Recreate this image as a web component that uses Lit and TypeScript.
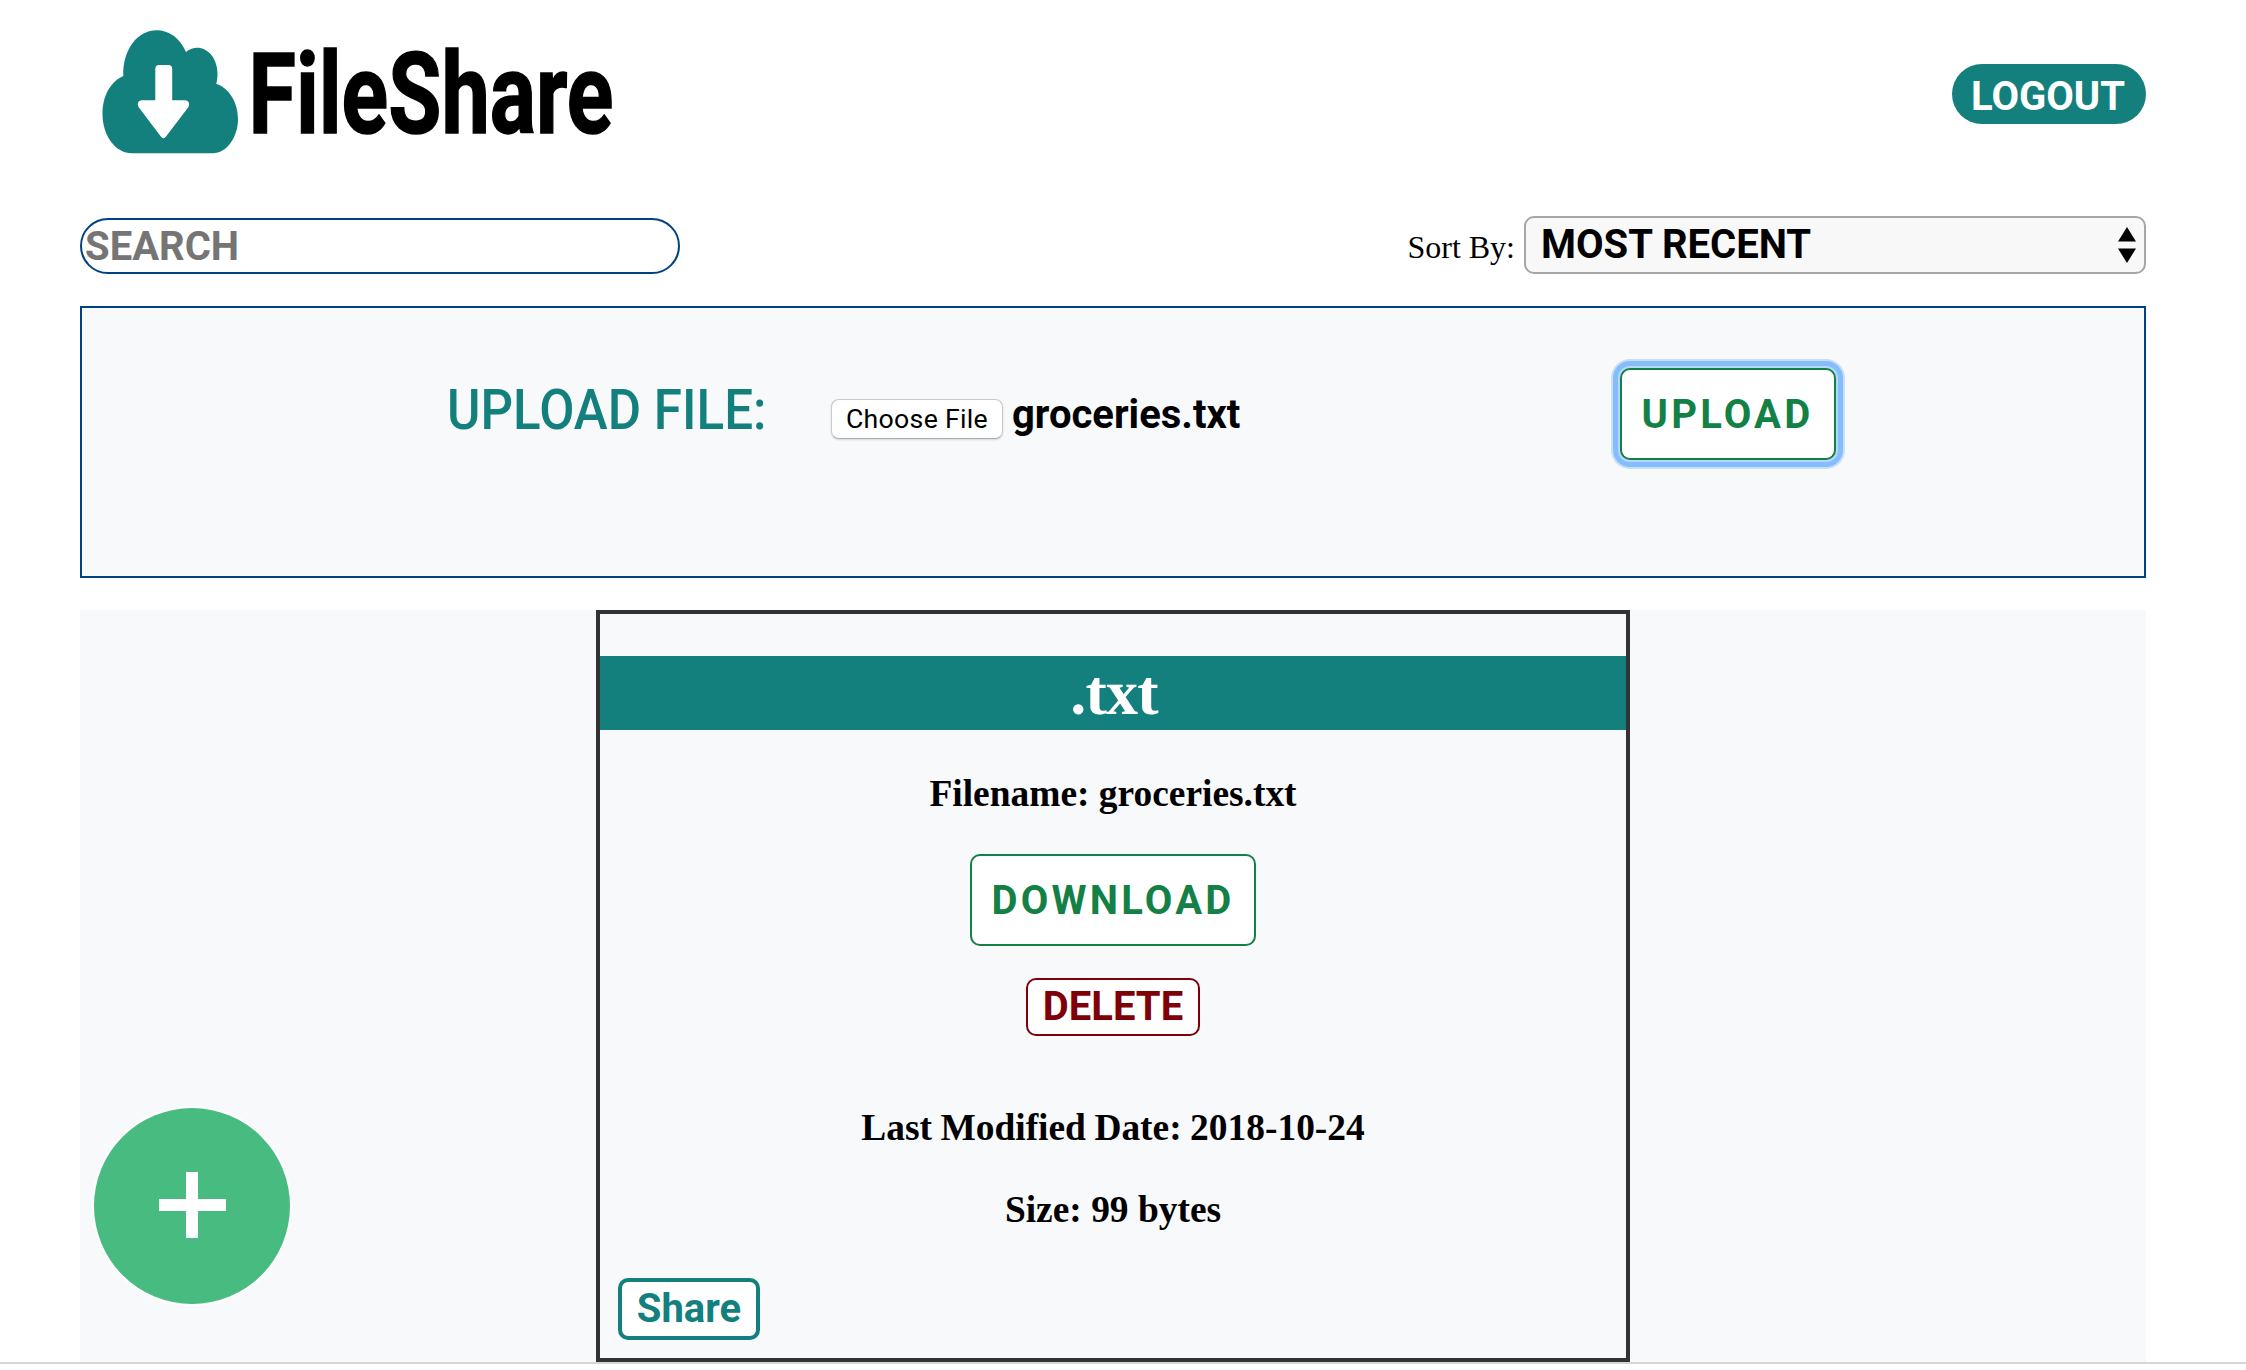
import { LitElement, html, css, svg } from "lit";
import { customElement, state } from "lit/decorators.js";

interface StoredFile {
  ext: string;
  name: string;
  modified: string;
  size: string;
}

@customElement("file-card")
class FileCard extends LitElement {
  static properties = { file: { attribute: false } };
  declare file: StoredFile;

  static styles = css`
    :host {
      display: flex;
      flex-direction: column;
      align-items: center;
      box-sizing: border-box;
      width: 1034px;
      height: 752px;
      border: 4px solid #333;
      color: #000;
      font-family: "Liberation Serif", serif;
    }
    .ext {
      align-self: stretch;
      margin: 42px 0 0;
      background: #13807e;
      color: #fff;
      text-align: center;
      font-size: 64px;
      line-height: 74px;
      font-weight: 700;
      letter-spacing: -0.8px;
      text-indent: 2px;
    }
    .line {
      margin: 0;
      font-size: 37.44px;
      line-height: 44px;
      font-weight: 700;
      white-space: nowrap;
    }
    .name { margin-top: 42px; }
    .date { margin-top: 70px; word-spacing: -0.9px; }
    .size { margin-top: 38px; }
    button {
      box-sizing: border-box;
      background: #fff;
      font-family: Roboto, sans-serif;
      font-size: 40px;
      font-weight: 700;
      padding: 0;
      border-radius: 10px;
      line-height: 46px;
      white-space: nowrap;
    }
    .download {
      margin-top: 38px;
      width: 286px;
      height: 92px;
      border: 2px solid #138046;
      color: #138046;
      letter-spacing: 3.2px;
      padding-top: 2px;
    }
    .delete {
      margin-top: 32px;
      width: 174px;
      height: 58px;
      border: 2px solid #800008;
      color: #800008;
    }
    .share {
      align-self: flex-start;
      margin: 46px 0 0 18px;
      width: 142px;
      height: 62px;
      border: 4px solid #13807e;
      color: #13807e;
    }
  `;

  render() {
    const f = this.file;
    return html`
      <h1 class="ext">${f.ext}</h1>
      <h3 class="line name">Filename: ${f.name}</h3>
      <button class="download">DOWNLOAD</button>
      <button class="delete">DELETE</button>
      <h3 class="line date">Last Modified Date: ${f.modified}</h3>
      <h3 class="line size">Size: ${f.size}</h3>
      <button class="share">Share</button>
    `;
  }
}

@customElement("app-root")
class AppRoot extends LitElement {
  @state() files: StoredFile[] = [
    { ext: ".txt", name: "groceries.txt", modified: "2018-10-24", size: "99 bytes" },
  ];

  static styles = css`
    :host {
      display: block;
      position: relative;
      box-sizing: border-box;
      height: 1370px;
      overflow: hidden;
      background: #fff;
      color: #000;
      font-family: Roboto, sans-serif;
    }
    .page {
      box-sizing: border-box;
      height: 1364px;
      padding: 0 100px 0 80px;
      border-bottom: 2px solid #d6d6d6;
      display: flex;
      flex-direction: column;
    }
    .header {
      height: 188px;
      flex: none;
      display: flex;
      justify-content: space-between;
      align-items: flex-start;
    }
    .logo { display: block; }
    .logo text { font-family: Roboto, sans-serif; font-weight: 700; }
    .logout {
      margin-top: 64px;
      width: 194px;
      height: 60px;
      border: 0;
      border-radius: 30px;
      background: #13807e;
      color: #fff;
      font: 700 40px/46px Roboto, sans-serif;
      padding: 6px 2px 0 0;
    }
    .tools {
      flex: none;
      height: 118px;
      display: flex;
      justify-content: space-between;
      align-items: flex-start;
    }
    .search {
      box-sizing: border-box;
      margin-top: 30px;
      width: 600px;
      height: 56px;
      border: 2px solid #004282;
      border-radius: 28px;
      padding: 0 3px;
      font: 700 40px/46px Roboto, sans-serif;
      background: #fff;
    }
    .search::placeholder { color: #757575; opacity: 1; }
    .sort { display: flex; gap: 9px; margin-top: 28px; }
    .sort-label {
      font-family: "Liberation Serif", serif;
      font-size: 32px;
      line-height: 37px;
      padding-top: 13px;
      white-space: nowrap;
    }
    .select {
      box-sizing: border-box;
      width: 622px;
      height: 58px;
      border: 2px solid #a6a6a6;
      border-radius: 10px;
      background: #f8f8f8;
      display: flex;
      justify-content: space-between;
      align-items: center;
      padding: 0 8px 0 15px;
      font-size: 40px;
      line-height: 46px;
      font-weight: 700;
    }
    .arrows { display: block; }
    .upload {
      box-sizing: border-box;
      flex: none;
      height: 272px;
      border: 2px solid #004282;
      background: #f8f9fb;
      display: flex;
      align-items: flex-start;
      padding-left: 365px;
    }
    .upload-title {
      margin-top: 70px;
      width: 384px;
      font-size: 54.6px;
      line-height: 64px;
      font-weight: 500;
      transform: scaleX(0.937);
      transform-origin: left;
      color: #13807e;
      white-space: nowrap;
    }
    .picker { display: flex; gap: 9px; width: 789px; }
    .choose {
      box-sizing: border-box;
      margin-top: 91px;
      width: 172px;
      height: 40px;
      border: 1px solid #c9c9c9;
      border-bottom-color: #b0b0b0;
      border-radius: 8px;
      background: #fff;
      box-shadow: 0 1px 2px rgba(0, 0, 0, 0.15);
      font: 400 26.67px/32px Roboto, sans-serif;
      letter-spacing: 0.3px;
      padding: 0 0 1px;
      color: #000;
    }
    .picked {
      margin-top: 84px;
      font-size: 40px;
      line-height: 46px;
      font-weight: 700;
    }
    .submit {
      box-sizing: border-box;
      margin-top: 60px;
      width: 216px;
      height: 92px;
      border: 2px solid #138046;
      border-radius: 10px;
      background: #fff;
      color: #138046;
      font: 700 40px/46px Roboto, sans-serif;
      letter-spacing: 3.2px;
      padding: 2px 1px 0 0;
      box-shadow: 0 0 0 2px #b4d7fb, 0 0 0 7px #84bdfa, 0 0 0 9px #c6dffa;
    }
    .list {
      flex: 1;
      margin-top: 32px;
      background: #f8f9fb;
      display: flex;
      justify-content: center;
      align-items: flex-start;
    }
    .fab {
      position: absolute;
      left: 94px;
      top: 1108px;
      width: 196px;
      height: 196px;
      border: 0;
      border-radius: 50%;
      padding: 0;
      background: #48bb80;
      box-shadow: 0 0 0 2px rgba(255, 255, 255, 0.8);
    }
    .fab svg { display: block; }
  `;

  private logo() {
    return svg`
      <svg class="logo" width="760" height="180" viewBox="80 0 760 180">
        <path fill="#13807e" d="M132 153.300C115 153.300 102.500 135 102.500 114C102.500 96 110.500 81.500 123.300 76C122.500 49 138 30.300 156.700 30.300C169 30.300 180 38 186 52C200 41 217.500 53 217.500 74C217.500 78 217 81 216.300 83.700C229 88 238 102 238 119C238 138 226 153.300 213 153.300Z"/>
        <path fill="#fff" d="M159 65H168.500Q172.200 65 172.200 69V100.300H185.500Q190.500 101.500 188.500 107L166 136.500Q163.400 140 160.800 136.500L138.500 107Q136 101.500 141.500 100.300H155.300V69Q155.300 65 159 65Z"/>
        <text x="248.500" y="132.700" font-size="113.500" stroke="#000" stroke-width="1.500" textLength="365" lengthAdjust="spacingAndGlyphs">FileShare</text>
      </svg>`;
  }

  render() {
    return html`
      <div class="page">
        <div class="header">
          ${this.logo()}
          <button class="logout">LOGOUT</button>
        </div>
        <div class="tools">
          <input class="search" placeholder="SEARCH" />
          <div class="sort">
            <span class="sort-label">Sort By:</span>
            <div class="select">
              <span>MOST RECENT</span>
              <svg class="arrows" width="18" height="36" viewBox="0 0 18 36">
                <path d="M9 0L18 14.500H0ZM0 21.500H18L9 36Z" />
              </svg>
            </div>
          </div>
        </div>
        <div class="upload">
          <div class="upload-title">UPLOAD FILE:</div>
          <div class="picker">
            <button class="choose">Choose File</button>
            <span class="picked">${this.files[0].name}</span>
          </div>
          <button class="submit">UPLOAD</button>
        </div>
        <div class="list">
          ${this.files.map((f) => html`<file-card .file=${f}></file-card>`)}
        </div>
      </div>
      <button class="fab" aria-label="Add">
        <svg width="196" height="196" viewBox="0 0 196 196">
          <path fill="#fff" d="M92 64H104V91H132V103H104V130H92V103H65V91H92Z" />
        </svg>
      </button>
    `;
  }
}
